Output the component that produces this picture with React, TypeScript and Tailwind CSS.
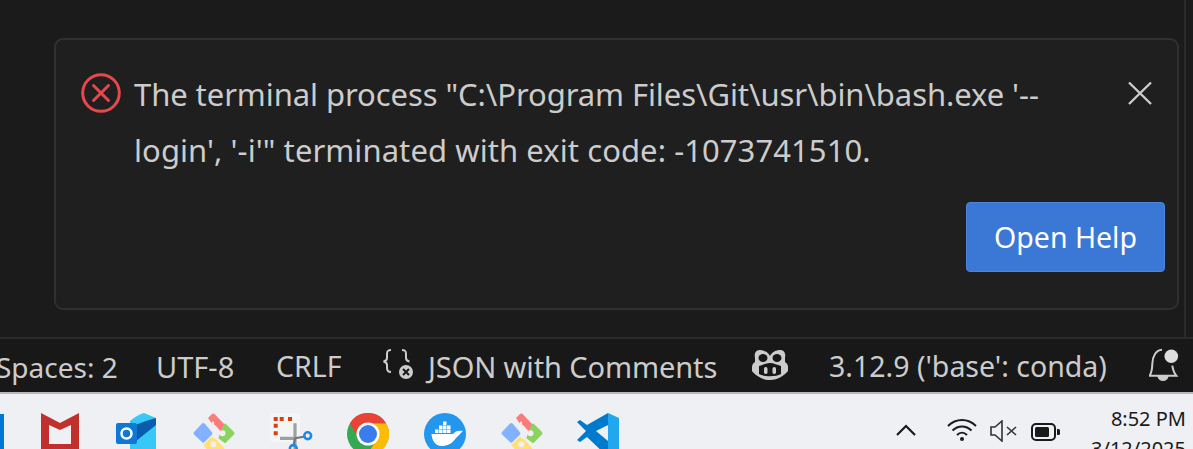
import React from "react";

const Git = () => (
  <svg width="42" height="44" viewBox="0 0 42 44" className="block">
    <path d="M1 19 L9 10.5 Q10.3 9.3 11.6 10.5 L19 19.2 Q20 20.3 19 21.4 L11.6 29 Q10.3 30.3 9 29 L1 21.4 Q0 20.3 1 19Z" fill="#82b1ff" />
    <path d="M15 5 L19 1 Q20.3 0 21.6 1 L32 12 Q33 13 32 14 L29 17.5 Q28 18.5 27 17.5 L22 12 L20 12 Z" fill="#fb7c7c" />
    <path d="M31 11 Q32 10 33 11 L41 19 Q42 20.3 41 21.5 L33 29.5 Q32 30.5 31 29.5 L25.3 25.3 L28 18 Z" fill="#8ad45e" />
    <circle cx="29.5" cy="20.3" r="3" fill="#eef0f4" />
    <path d="M18.7 23.7 L10.3 32 L20 44 L31 44 L31.3 35.3 L23.7 27 Z" fill="#ffdf76" />
    <circle cx="20.5" cy="31.3" r="3" fill="#eef0f4" />
    <path d="M20 8.7 L21 25" stroke="#eef0f4" strokeWidth="2" />
  </svg>
);

export default function App() {
  return (
    <div className="w-[1193px] h-[449px] overflow-hidden flex flex-col bg-[#181818] font-['Noto_Sans',sans-serif]">
      <div className="h-[339px] shrink-0 border-b-2 border-[#2b2b2b] bg-[#1b1b1b] flex items-stretch">
        <div className="w-[1184px] shrink-0 pl-[54px] pt-[38px]">
          <div className="w-[1125px] h-[272px] rounded-[9px] border-2 border-[#303030] bg-[#1f1f1f] flex flex-col pl-[24px] pr-[12px] pt-[26px]">
            <div className="flex items-start h-[110px]">
              <svg width="42" height="42" viewBox="0 0 42 42" fill="none" stroke="#e5484d" strokeWidth="3" className="shrink-0 mt-[6px]">
                <circle cx="21" cy="21" r="18.3" />
                <path d="M13.5 13.5 L28.5 28.5 M28.5 13.5 L13.5 28.5" strokeLinecap="round" />
              </svg>
              <p className="ml-[12px] w-[930px] text-[31px] leading-[56px] text-[#cccccc]">
                <span className="tracking-[-0.08px]">The terminal process "C:\Program Files\Git\usr\bin\bash.exe '--</span>
                <span className="tracking-[0.07px]">login', '-i'" terminated with exit code: -1073741510.</span>
              </p>
              <svg width="24" height="24" viewBox="0 0 24 24" className="ml-auto mr-[13px] mt-[15px] shrink-0" fill="none" stroke="#cccccc" strokeWidth="2.4">
                <path d="M1 1.5 L23 23 M23 1.5 L1 23" />
              </svg>
            </div>
            <div className="flex justify-end mt-[26px]">
              <button className="w-[199px] h-[70px] rounded-[4px] bg-[#3b78d6] border border-[#4a84dc] text-white text-[28.5px] leading-none">Open Help</button>
            </div>
          </div>
        </div>
        <div className="flex-1 border-l-2 border-[#2b2b2b]" />
      </div>
      <div className="h-[53px] shrink-0 bg-[#181818] flex items-center text-[29px] text-[#cccccc] whitespace-nowrap">
        <span className="ml-[-4px] w-[120px] shrink-0 text-[28px] mt-[2px]">Spaces: 2</span>
        <span className="ml-[40px] w-[120px] shrink-0 mt-[2px]">UTF-8</span>
        <span className="shrink-0 w-[106px] text-[28.5px] mt-[2px]">CRLF</span>
        <svg width="32" height="34" viewBox="0 0 32 34" className="shrink-0 mb-[2px]" fill="none" stroke="#cccccc" strokeWidth="2">
          <path d="M9 2 C5 2 5 4 5 7 V10 C5 12 4 13 1.5 13.5 C4 14 5 15 5 17 V20 C5 23 6 24 9 24" />
          <path d="M20 2 C24 2 24 4 24 7 V10 C24 12 25 13 27.5 13.5" />
          <circle cx="24" cy="24" r="7" fill="#cccccc" stroke="none" />
          <path d="M21 21 L27 27 M27 21 L21 27" stroke="#181818" strokeWidth="2" />
        </svg>
        <span className="ml-[14px] shrink-0 w-[324px] tracking-[-0.1px] mt-[2px]">JSON with Comments</span>
        <svg width="36" height="30" viewBox="0 0 36 30" className="shrink-0 mb-[2px]" fill="#cccccc">
          <path d="M18 6 C16 2 12 0 8 0 C4 0 2 3 3 8 L3 12 C1 13 0 15 0 17 V21 C3 25 10 30 18 30 C26 30 33 25 36 21 V17 C36 15 35 13 33 12 L33 8 C34 3 32 0 28 0 C24 0 20 2 18 6Z" />
          <ellipse cx="11" cy="8" rx="4.5" ry="4" fill="#181818" />
          <ellipse cx="25" cy="8" rx="4.5" ry="4" fill="#181818" />
          <path d="M7 16 C11 15 14 13 18 13 C22 13 25 15 29 16 V24 C24 27 12 27 7 24Z" fill="#181818" />
          <rect x="12" y="17" width="3.5" height="7" rx="1.7" fill="#cccccc" />
          <rect x="20.5" y="17" width="3.5" height="7" rx="1.7" fill="#cccccc" />
        </svg>
        <span className="ml-[41px] shrink-0 w-[320px] text-[28.5px] mt-[2px]">3.12.9 ('base': conda)</span>
        <svg width="34" height="34" viewBox="0 0 34 34" className="shrink-0 mb-[4px]" fill="none" stroke="#cccccc" strokeWidth="2">
          <path d="M3.3 17 C3.5 9 7 3 13 2.7 M23.3 18.7 C24 23 25 26 27.3 28.7 H0.5 C2.5 26 3.2 22 3.3 17" />
          <path d="M9.5 29.5 C10.5 34 17.5 34 18.5 29.5Z" fill="#cccccc" />
          <circle cx="22.3" cy="9.3" r="6.8" fill="#dedede" stroke="none" />
        </svg>
      </div>
      <div className="flex-1 border-t-2 border-[#b8b8b8] bg-[#eef0f4] flex items-start overflow-hidden">
        <div className="w-[4px] h-[36px] bg-[#0078d4] mt-[20px] shrink-0" />
        <svg width="38" height="44" viewBox="0 0 38 44" className="ml-[37px] mt-[19px] shrink-0" fill="#c1302c">
          <path d="M0 0 L19 10 L38 0 V44 H0 Z M8 12 V31 H30 V12 L19 17 Z" fillRule="evenodd" />
        </svg>
        <svg width="44" height="44" viewBox="0 0 44 44" className="ml-[37px] mt-[19px] shrink-0">
          <path d="M14 8 Q21 2 28 0 L40 5 V44 H14 Z" fill="#37c8f5" />
          <path d="M14 14 L30 8 L40 5 V12 L20 28 H14Z" fill="#0a5cad" />
          <rect x="0" y="10" width="21" height="21" rx="2" fill="#0f78d4" />
          <circle cx="10.5" cy="20.5" r="5" fill="none" stroke="white" strokeWidth="2.5" />
        </svg>
        <span className="ml-[33px] mt-[19px] shrink-0"><Git /></span>
        <svg width="44" height="44" viewBox="0 0 44 44" className="ml-[35px] mt-[19px] shrink-0" fill="none">
          <rect x="0" y="0" width="30" height="29" rx="3" fill="#f4f5f5" />
          <path d="M3.7 4 h4 v4 h-4z M9.7 4 h4 v4 h-4z M18 4 h4 v4 h-4z M3.7 10.7 h4 v4 h-4z M3.7 18.3 h4 v4 h-4z" fill="#dc3e12" />
          <path d="M10 25.3 H25 M25 10.3 V36" stroke="#9aa0a6" strokeWidth="3.2" />
          <path d="M25 25.3 L35 23.5 M25 25.3 L23.5 33" stroke="#6d7378" strokeWidth="2" />
          <circle cx="37.7" cy="22.7" r="3.4" stroke="#1e88e5" strokeWidth="2.6" />
          <circle cx="23.3" cy="35.5" r="3.4" stroke="#1e88e5" strokeWidth="2.6" />
        </svg>
        <svg width="42" height="44" viewBox="0 0 42 44" className="ml-[33px] mt-[19px] shrink-0">
          <circle cx="21" cy="21" r="21" fill="#34a853" />
          <path d="M39.2 10.5 A21 21 0 0 0 2.8 10.5 L12 26 L21 10.5Z" fill="#ea4335" />
          <path d="M39.2 10.5 H21 L30 26 L20 42 A21 21 0 0 0 39.2 10.5Z" fill="#fbbc05" />
          <circle cx="21" cy="21" r="11.5" fill="#fff" />
          <circle cx="21" cy="21" r="9" fill="#3b7ced" />
        </svg>
        <svg width="42" height="44" viewBox="0 0 42 44" className="ml-[35px] mt-[19px] shrink-0">
          <circle cx="21" cy="21" r="21" fill="#2396ed" />
          <path d="M7.5 21 H29 C31 18 35 17 39 18 C36 21 34 23 32 25 C28 31 23 33 17.5 33 C11 33 8 27 7.5 21Z" fill="#fff" />
          <path d="M11 16.5 h3.5 v3.5 h-3.5z M15 16.5 h3.5 v3.5 h-3.5z M19 16.5 h3.5 v3.5 h-3.5z M23 16.5 h3.5 v3.5 h-3.5z M15 12.5 h3.5 v3.5 h-3.5z M19 12.5 h3.5 v3.5 h-3.5z M23 12.5 h3.5 v3.5 h-3.5z M19 8.5 h3.5 v3.5 h-3.5z" fill="#fff" />
        </svg>
        <span className="ml-[35px] mt-[19px] shrink-0"><Git /></span>
        <svg width="44" height="44" viewBox="0 0 44 44" className="ml-[34px] mt-[19px] shrink-0">
          <path d="M31 0 L42 5 V44 H31 L31 30 V0Z" fill="#22a7ef" />
          <path d="M31 0 V44 L10 24 L3 29 L0 27 L9 18 L0 9 L3 7 L10 12Z M31 12 L19 18 L31 28Z" fill="#007acc" fillRule="evenodd" />
        </svg>
        <div className="ml-auto flex items-start text-[#1a1a1a] mr-[7px] shrink-0">
          <svg width="20" height="12" viewBox="0 0 20 12" fill="none" stroke="#1a1a1a" strokeWidth="2.2" className="mt-[30px] shrink-0">
            <path d="M1 11 L10 2 L19 11" />
          </svg>
          <svg width="30" height="24" viewBox="0 0 30 24" fill="none" stroke="#1a1a1a" strokeWidth="2" className="ml-[31px] mt-[24px] shrink-0">
            <path d="M1 8 C9 0 21 0 29 8 M5.5 12.5 C11 7 19 7 24.5 12.5 M10 17 C13 14 17 14 20 17" />
            <circle cx="15" cy="21" r="2" fill="#1a1a1a" stroke="none" />
          </svg>
          <svg width="27" height="22" viewBox="0 0 27 22" fill="none" stroke="#333" strokeWidth="1.6" className="ml-[13px] mt-[26px] shrink-0">
            <path d="M1 7 H5 L12 1 V21 L5 15 H1Z" />
            <path d="M17 7 L26 15 M26 7 L17 15" />
          </svg>
          <svg width="30" height="18" viewBox="0 0 30 18" fill="none" className="ml-[14px] mt-[29px] shrink-0">
            <rect x="1" y="1" width="23" height="16" rx="4" stroke="#1a1a1a" strokeWidth="2" />
            <rect x="4" y="4" width="14" height="10" rx="1.5" fill="#1a1a1a" />
            <path d="M26 6 h1.5 a1.5 1.5 0 0 1 1.5 1.5 v3 a1.5 1.5 0 0 1 -1.5 1.5 h-1.5z" fill="#1a1a1a" />
          </svg>
          <div className="ml-[23px] w-[102px] text-right text-[20px] leading-[30px] mt-[10px] shrink-0">
            <div>8:52 PM</div>
            <div>3/12/2025</div>
          </div>
        </div>
      </div>
    </div>
  );
}
